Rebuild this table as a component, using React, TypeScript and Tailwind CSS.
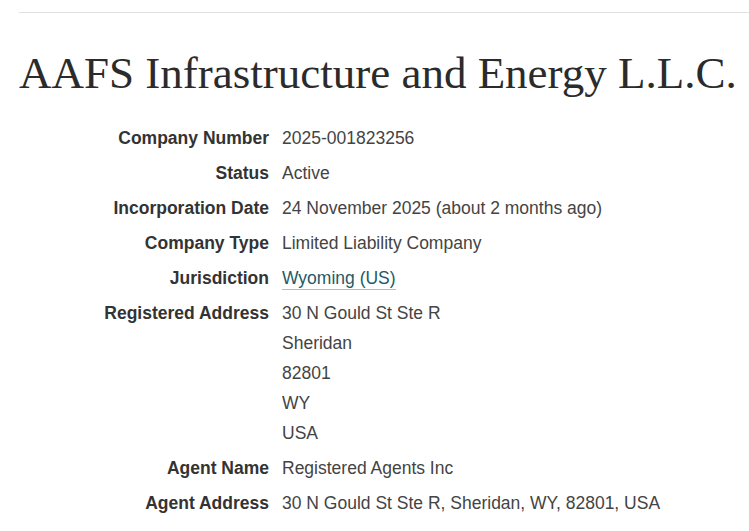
import React from "react";

const rows: { label: string; values: React.ReactNode[] }[] = [
  { label: "Company Number", values: ["2025-001823256"] },
  { label: "Status", values: ["Active"] },
  { label: "Incorporation Date", values: ["24 November 2025 (about 2 months ago)"] },
  { label: "Company Type", values: ["Limited Liability Company"] },
  {
    label: "Jurisdiction",
    values: [
      <a key="j" href="#" className="text-[#1f5a66] border-b border-[#a9c0c4] pb-[1px]">
        Wyoming (US)
      </a>,
    ],
  },
  { label: "Registered Address", values: ["30 N Gould St Ste R", "Sheridan", "82801", "WY", "USA"] },
  { label: "Agent Name", values: ["Registered Agents Inc"] },
  { label: "Agent Address", values: ["30 N Gould St Ste R, Sheridan, WY, 82801, USA"] },
];

export default function App() {
  return (
    <div className="min-h-[531px] bg-white pl-[19px] overflow-hidden">
      <div className="pt-[12px]">
        <div className="h-[1px] bg-[#e0e0e0]" />
      </div>
      <h1
        className="mt-[32px] text-[45px] leading-[56px] text-[#2b2b2b] whitespace-nowrap"
        style={{ fontFamily: '"Liberation Serif", serif' }}
      >
        AAFS Infrastructure and Energy L.L.C.
      </h1>
      <dl
        className="mt-[22px] grid grid-cols-[250px_1fr] gap-x-[13px] text-[17.5px] text-[#444]"
        style={{ fontFamily: '"Liberation Sans", Arial, sans-serif' }}
      >
        {rows.map((r) => (
          <React.Fragment key={r.label}>
            <dt className="text-right font-bold text-[#333] leading-[30px] mb-[5px]">{r.label}</dt>
            <dd className="mb-[5px]">
              {r.values.map((v, i) => (
                <div key={i} className="leading-[30px]">
                  {v}
                </div>
              ))}
            </dd>
          </React.Fragment>
        ))}
      </dl>
    </div>
  );
}
